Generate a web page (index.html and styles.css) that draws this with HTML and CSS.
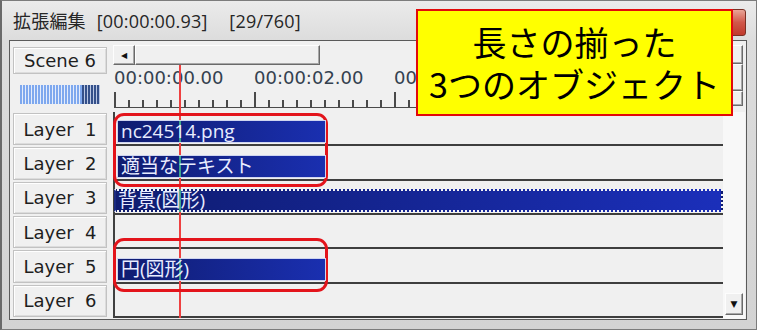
FILE: index.html
```html
<!DOCTYPE html>
<html lang="ja">
<head>
    <meta charset="UTF-8">
    <meta name="viewport" content="width=device-width, initial-scale=1.0">
    <title>拡張編集</title>
    <link rel="stylesheet" href="styles.css">
</head>
<body>
    <div class="window">
        <div class="titlebar">
            <span class="title">拡張編集 [00:00:00.93]  [29/760]</span>
            <span class="close">×</span>
        </div>
        <div class="client">
            <div class="side">
                <div class="btn scene">Scene 6</div>
                <div class="meter"></div>
                <div class="layers">
                    <div class="btn layer">Layer  1</div>
                    <div class="btn layer">Layer  2</div>
                    <div class="btn layer">Layer  3</div>
                    <div class="btn layer">Layer  4</div>
                    <div class="btn layer">Layer  5</div>
                    <div class="btn layer">Layer  6</div>
                </div>
            </div>
            <div class="timeline">
                <div class="hscroll">
                    <span class="raised arrow">◀</span>
                    <span class="raised thumb"></span>
                </div>
                <div class="labels">
                    <span>00:00:00.00</span>
                    <span>00:00:02.00</span>
                    <span>00:00:04.00</span>
                </div>
                <div class="ticks"></div>
                <div class="rows">
                    <div class="row"><div class="clip">nc24514.png</div></div>
                    <div class="row"><div class="clip">適当なテキスト</div></div>
                    <div class="row"><div class="clip wide">背景(図形)</div></div>
                    <div class="row"></div>
                    <div class="row"><div class="clip">円(図形)</div></div>
                    <div class="row"></div>
                </div>
                <div class="playhead"></div>
            </div>
            <div class="vscroll">
                <span class="raised vbtn b1"></span>
                <span class="raised vbtn b2"></span>
                <span class="raised vbtn b3"></span>
                <div class="vtrack">
                    <span class="raised down">▼</span>
                </div>
            </div>
        </div>

        <div class="note">
            <div>長さの揃った</div>
            <div>3つのオブジェクト</div>
        </div>
        <div class="mark mark1"></div>
        <div class="mark mark2"></div>
    </div>
</body>
</html>
```

FILE: styles.css
```css
* {
    box-sizing: border-box;
}

body {
    margin: 0;
    background: #d8d8d8;
}

.window {
    position: relative;
    width: 757px;
    height: 330px;
    border: 1px solid #7c7c7c;
    border-left: 2px solid #6a6a6a;
    padding: 0 9px 9px 7px;
    background: linear-gradient(#ebebeb, #dcdcdc 40px, #d3d3d3);
    display: flex;
    flex-direction: column;
}

.titlebar {
    height: 39px;
    flex: none;
    display: flex;
    align-items: flex-start;
}

.title {
    margin: 8px 0 0 4px;
    font: 18px/24px "Open Sans", "Noto Sans CJK JP", sans-serif;
    color: #262626;
    word-spacing: 6px;
    letter-spacing: 0.2px;
    white-space: pre;
}

.close {
    margin: 8px 1px 0 auto;
    width: 45px;
    height: 27px;
    border: 1px solid #7a3024;
    border-radius: 3px;
    background: linear-gradient(#e9a597, #d0574a 50%, #c0392b);
}

.client {
    flex: 1;
    display: flex;
    padding: 0 1px 0 3px;
    border: 1px solid #5a5a5a;
    background: #f0f0f0;
}

/* left column */
.side {
    width: 94px;
    flex: none;
    margin-right: 6px;
    padding-top: 6px;
    display: flex;
    flex-direction: column;
}

.btn {
    background: #f0f0f0;
    border: 1px solid #c2c2c2;
    box-shadow: inset 1px 1px 0 #fff, inset -1px -1px 0 #dcdcdc;
    font: 18px "DejaVu Sans", sans-serif;
    color: #1e1e1e;
    display: flex;
    align-items: center;
    justify-content: center;
    white-space: pre;
}

.scene {
    height: 27px;
    flex: none;
}

.meter {
    width: 80px;
    height: 19px;
    flex: none;
    margin: 11px 0 0 7px;
    background:
        repeating-linear-gradient(to right, #34508a 0 2px, #b9c6e2 2px 3px) right / 18px 100% no-repeat,
        repeating-linear-gradient(to right, #7ea8ee 0 2px, #e4ecfb 2px 3px);
}

.layers {
    height: 206px;
    margin-top: 8px;
    display: flex;
    flex-direction: column;
}

.layer {
    flex: 1;
    margin: 1px 0;
}

/* timeline */
.timeline {
    position: relative;
    width: 610px;
    flex: none;
    padding-top: 4px;
    display: flex;
    flex-direction: column;
}

.raised {
    display: flex;
    align-items: center;
    justify-content: center;
    background: #f0f0f0;
    border: 1px solid;
    border-color: #fdfdfd #6a6a6a #6a6a6a #fdfdfd;
    box-shadow: inset -1px -1px 0 #a8a8a8;
    color: #111;
}

.hscroll {
    height: 20px;
    flex: none;
    display: flex;
}

.arrow {
    width: 22px;
    font: 8px "DejaVu Sans", sans-serif;
}

.thumb {
    width: 185px;
}

.labels {
    height: 26px;
    flex: none;
    display: flex;
    padding-left: 1px;
    font: 18px/26px "DejaVu Sans", sans-serif;
    color: #34414f;
    white-space: nowrap;
}

.labels span {
    width: 140px;
    flex: none;
}

.ticks {
    height: 21px;
    flex: none;
    background:
        linear-gradient(#4a4a4a, #4a4a4a) 1px 16px / 100% 1px no-repeat,
        repeating-linear-gradient(to right, #4a4a4a 0 2px, transparent 2px 140px) 1px 1px / 100% 16px no-repeat,
        repeating-linear-gradient(to right, #4a4a4a 0 2px, transparent 2px 14px) 1px 9px / 100% 8px no-repeat;
}

.rows {
    height: 206px;
    flex: none;
    display: flex;
    flex-direction: column;
    border-left: 2px solid #404040;
}

.row {
    flex: 1;
    display: flex;
    align-items: flex-end;
    padding-bottom: 1px;
    border-bottom: 2px solid #3e3e3e;
}

.clip {
    --ph: 61px;
    position: relative;
    z-index: 1;
    width: 209px;
    height: 23px;
    margin-left: 2px;
    padding-left: 3px;
    border: 1px solid #cfd5ef;
    background:
        linear-gradient(to right, transparent var(--ph), #3da58c var(--ph), #3da58c calc(var(--ph) + 2px), transparent calc(var(--ph) + 2px)),
        linear-gradient(to right, #0f1c70, #1a2fb0);
    color: #e8ecff;
    font: 19px/21px "Open Sans", "Noto Sans CJK JP", sans-serif;
    white-space: nowrap;
}

.clip.wide {
    --ph: 63px;
    flex: 1;
    margin-left: -1px;
    padding-left: 2px;
    border: 2px dotted #f4f4f4;
    border-left-style: solid;
    border-left-color: #1a2a80;
    background:
        linear-gradient(to right, transparent var(--ph), #3da58c var(--ph), #3da58c calc(var(--ph) + 2px), transparent calc(var(--ph) + 2px)),
        linear-gradient(to right, #0f1c70, #1b2fba);
    line-height: 19px;
}

.playhead {
    position: absolute;
    left: 66px;
    top: 24px;
    bottom: 1px;
    width: 2px;
    background: #ee4040;
}

/* right scroll column */
.vscroll {
    width: 22px;
    flex: none;
    padding-top: 4px;
    display: flex;
    flex-direction: column;
}

.vbtn {
    width: 20px;
    flex: none;
}

.b1 {
    height: 19px;
}

.b2 {
    height: 27px;
}

.b3 {
    height: 15px;
}

.vtrack {
    flex: 1;
    margin-top: 6px;
    padding: 0 0 4px 2px;
    display: flex;
    flex-direction: column;
    justify-content: flex-end;
    background: #f8f8f8;
}

.down {
    width: 18px;
    height: 22px;
    font: 9px "DejaVu Sans", sans-serif;
}

/* annotations */
.note {
    position: absolute;
    left: 414px;
    top: 8px;
    width: 317px;
    height: 107px;
    border: 2px solid #e20a0a;
    background: #ffff00;
    display: flex;
    flex-direction: column;
    align-items: center;
    justify-content: center;
    font: 34px/42px "Noto Sans CJK JP", sans-serif;
    color: #000;
}

.mark {
    position: absolute;
    left: 111px;
    width: 215px;
    border: 3px solid #e3141b;
    border-radius: 11px;
}

.mark1 {
    top: 112px;
    height: 74px;
}

.mark2 {
    top: 237px;
    height: 54px;
}
```
